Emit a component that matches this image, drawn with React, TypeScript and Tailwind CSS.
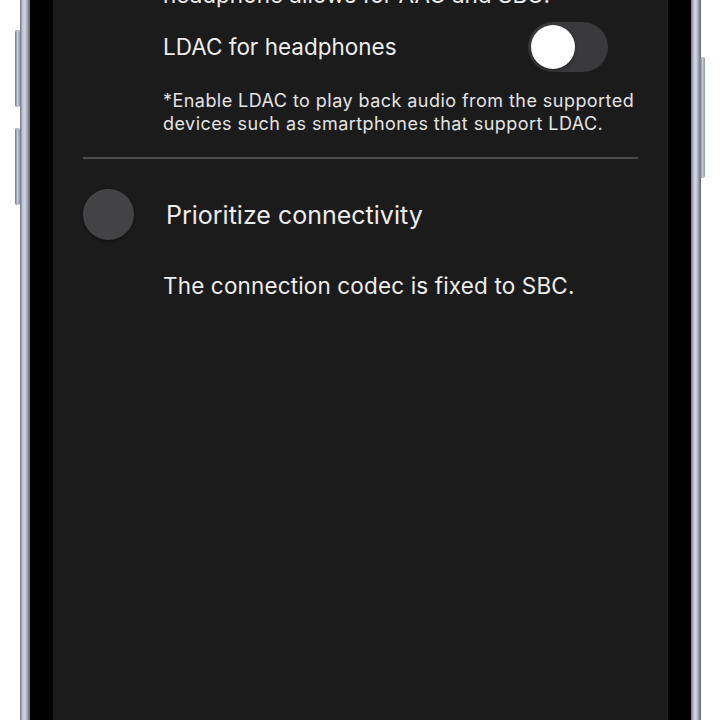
import React from 'react';

const font = { fontFamily: 'Inter, "Noto Sans", sans-serif' };

const SideButton = ({ className }: { className: string }) => (
  <div
    className={`absolute w-[5px] rounded-[2px] bg-[linear-gradient(to_right,#6f7685,#c3cad6,#8e96a5)] ${className}`}
  />
);

const Rail = () => (
  <div className="w-[10px] shrink-0 bg-[linear-gradient(to_right,#6b7281,#bcc4d1,#d3d9e3,#98a0ae,#5d6470)]" />
);

const Toggle = ({ on }: { on: boolean }) => (
  <div
    className={`w-[80px] h-[50px] rounded-full p-[3px] flex items-center ${
      on ? 'bg-[#34c759] justify-end' : 'bg-[#3a3a3d] justify-start'
    }`}
  >
    <div className="w-[44px] h-[44px] rounded-full bg-white shadow-[0_2px_4px_rgba(0,0,0,0.35)]" />
  </div>
);

export default function App() {
  return (
    <div className="relative w-[720px] h-[720px] bg-white flex overflow-hidden" style={font}>
      <SideButton className="left-[15px] top-[30px] h-[77px]" />
      <SideButton className="left-[15px] top-[128px] h-[77px]" />
      <SideButton className="left-[700px] top-[57px] h-[121px]" />

      <div className="w-[20px] shrink-0" />
      <Rail />
      <div className="w-[23px] shrink-0 bg-black" />

      <div className="w-[615px] shrink-0 bg-[#1b1b1b] overflow-hidden text-[#ededed]">
        <p className="mt-[-19px] pl-[110px] text-[22.5px] leading-[28px]">
          headphone allows for AAC and SBC.
        </p>

        <div className="mt-[13px] pl-[110px] pr-[60px] flex items-center justify-between">
          <span className="text-[22.5px] leading-[28px]">LDAC for headphones</span>
          <Toggle on={false} />
        </div>

        <p className="mt-[17px] pl-[110px] pr-[20px] text-[18px] leading-[23px] tracking-[0.45px] text-[#e4e4e4]">
          *Enable LDAC to play back audio from the supported
          <br />
          devices such as smartphones that support LDAC.
        </p>

        <div className="mt-[22px] mx-[30px] h-[2px] bg-[#4c4c4e]" />

        <div className="mt-[30px] pl-[30px] flex items-center">
          <div className="w-[51px] h-[51px] rounded-full bg-[#434345] shadow-[inset_0_1px_2px_rgba(255,255,255,0.06),0_1px_3px_rgba(0,0,0,0.5)]" />
          <span className="ml-[32px] text-[25px] leading-[32px]">Prioritize connectivity</span>
        </div>

        <p className="mt-[31px] pl-[110px] text-[22.5px] leading-[30px] tracking-[0.15px]">
          The connection codec is fixed to SBC.
        </p>
      </div>

      <div className="w-[23px] shrink-0 bg-black" />
      <Rail />
      <div className="flex-1" />
    </div>
  );
}
